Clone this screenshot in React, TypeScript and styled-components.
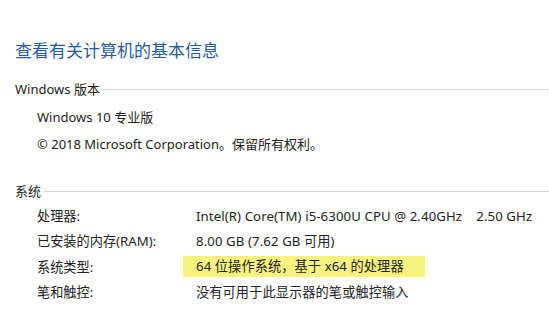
import * as React from "react";
import styled, { createGlobalStyle } from "styled-components";

const GlobalStyle = createGlobalStyle`
  html, body {
    margin: 0;
    padding: 0;
    background: #fff;
  }
  body {
    font-family: "Noto Sans", "Noto Sans CJK SC", sans-serif;
    color: #1a1a1a;
  }
`;

const Page = styled.div`
  width: 549px;
  height: 325px;
  overflow: hidden;
  padding: 40px 0 0 15px;
  box-sizing: border-box;
`;

const Title = styled.h1`
  margin: 0 0 16px;
  font-size: 17px;
  font-weight: 400;
  line-height: 22px;
  color: #1f5ca8;
`;

const SectionHead = styled.div`
  display: flex;
  align-items: center;
  height: 20px;
  font-size: 13px;
  color: #222;

  &::after {
    content: "";
    flex: 1;
    height: 1px;
    margin-left: 3px;
    margin-top: 3px;
    background: #d4d4d4;
  }
`;

const Section = styled.section<{ $gap: number }>`
  margin-bottom: ${(p) => p.$gap}px;
`;

const Lines = styled.div`
  padding: 6px 0 0 22px;
  display: flex;
  flex-direction: column;
`;

const Line = styled.div`
  height: 27px;
  line-height: 27px;
  font-size: 13px;
  color: #222;
`;

const Grid = styled.div`
  padding: 3px 0 0 22px;
  display: grid;
  grid-template-columns: 159px auto;
  grid-auto-rows: 25.3px;
  align-items: center;
  font-size: 13.2px;
  color: #222;
`;

const Label = styled.div`
  white-space: nowrap;
`;

const Value = styled.div<{ $mark?: boolean }>`
  white-space: nowrap;
  justify-self: start;
  letter-spacing: 0.1px;
  ${(p) =>
    p.$mark
      ? `
    background: #f8f37c;
    margin-left: -13px;
    padding: 0 13px;
    width: 216px;
    line-height: 21px;
  `
      : ""}
`;

const rows: { label: string; value: string; mark?: boolean }[] = [
  { label: "处理器:", value: "Intel(R) Core(TM) i5-6300U CPU @ 2.40GHz\u00a0\u00a0\u00a0 2.50 GHz" },
  { label: "已安装的内存(RAM):", value: "8.00 GB (7.62 GB 可用)" },
  { label: "系统类型:", value: "64 位操作系统，基于 x64 的处理器", mark: true },
  { label: "笔和触控:", value: "没有可用于此显示器的笔或触控输入" },
];

const App = () => (
  <>
    <GlobalStyle />
    <Page>
      <Title>查看有关计算机的基本信息</Title>
      <Section $gap={22}>
        <SectionHead>Windows 版本</SectionHead>
        <Lines>
          <Line>Windows 10 专业版</Line>
          <Line>© 2018 Microsoft Corporation。保留所有权利。</Line>
        </Lines>
      </Section>
      <Section $gap={0}>
        <SectionHead>系统</SectionHead>
        <Grid>
          {rows.map((r) => (
            <React.Fragment key={r.label}>
              <Label>{r.label}</Label>
              <Value $mark={r.mark}>{r.value}</Value>
            </React.Fragment>
          ))}
        </Grid>
      </Section>
    </Page>
  </>
);

export default App;
